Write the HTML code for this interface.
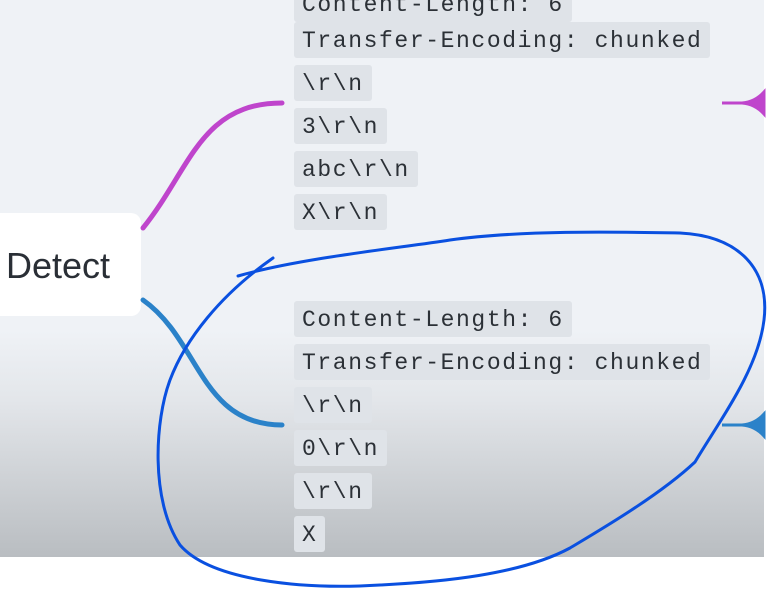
<!DOCTYPE html><html><head><style>
body{margin:0;width:769px;height:591px;overflow:hidden;background:#fff;position:relative;font-family:"Liberation Sans",sans-serif}
#bg{position:absolute;left:0;top:0;width:764px;height:557px;background:linear-gradient(#eff2f6 0,#eff2f6 330px,#e3e6ea 400px,#b9bdc1 557px)}
.b{position:absolute;left:294px;height:36px;background:#dfe3e8;border-radius:3px;font-family:"Liberation Mono",monospace;font-size:23px;letter-spacing:1.6px;color:#2b3036;line-height:38px;padding:0 8px;box-sizing:border-box;white-space:pre}
#d{position:absolute;left:-10px;top:213px;width:151px;height:103px;background:#fff;border-radius:10px;font-size:36px;color:#2a2f36;line-height:106px;padding-left:16px;box-sizing:border-box}
svg{position:absolute;left:0;top:0}
</style></head><body>
<div id="bg"></div>
<div id="d">Detect</div>
<div class="b" style="top:-14px">Content-Length: 6</div>
<div class="b" style="top:22px">Transfer-Encoding: chunked</div>
<div class="b" style="top:65px">\r\n</div>
<div class="b" style="top:108px">3\r\n</div>
<div class="b" style="top:151px">abc\r\n</div>
<div class="b" style="top:194px">X\r\n</div>
<div class="b" style="top:301px">Content-Length: 6</div>
<div class="b" style="top:344px">Transfer-Encoding: chunked</div>
<div class="b" style="top:387px">\r\n</div>
<div class="b" style="top:430px">0\r\n</div>
<div class="b" style="top:473px">\r\n</div>
<div class="b" style="top:516px">X</div>
<svg width="769" height="591">
<path d="M143 228 C190 170 200 103 282 103" stroke="#bf45cc" stroke-width="5" fill="none" stroke-linecap="round"/>
<path d="M143 300 C200 340 200 425 282 425" stroke="#2b82c9" stroke-width="5" fill="none" stroke-linecap="round"/>
<path d="M722 103 L742 103 Q755 102 764 92 L764 114 Q755 104 742 103Z" fill="#bf45cc" stroke="#bf45cc" stroke-width="3"/>
<path d="M722 425 L742 425 Q755 424 764 414 L764 436 Q755 426 742 425Z" fill="#2b82c9" stroke="#2b82c9" stroke-width="3"/>
<path d="M238 276 C300 258 400 248 450 240 C520 230 620 232 680 233 C740 236 770 270 764 320 C758 370 720 420 695 462 C660 495 600 530 570 548 C520 575 440 582 380 585 C300 590 210 580 180 545 C150 500 155 420 170 380 C185 340 220 295 273 258" stroke="#0a50e0" stroke-width="3" fill="none" stroke-linecap="round"/>
</svg>
</body></html>
